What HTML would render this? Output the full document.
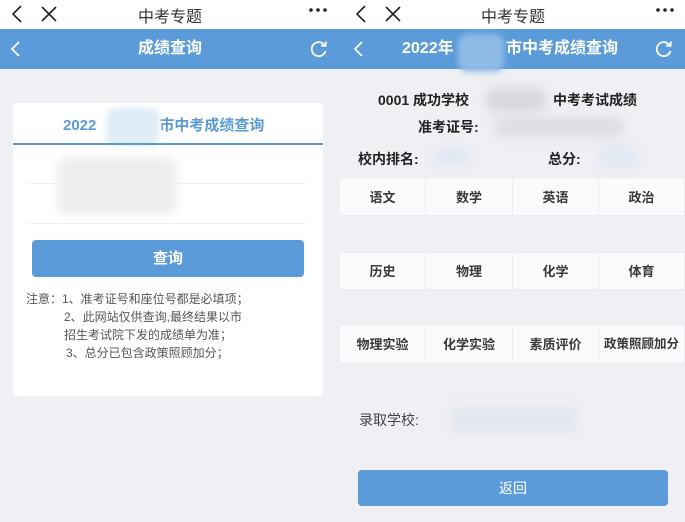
<!DOCTYPE html>
<html><head><meta charset="utf-8"><style>
*{margin:0;padding:0;box-sizing:border-box}
body{width:685px;height:522px;overflow:hidden;background:#efeff4;font-family:"Liberation Sans","Noto Sans CJK SC",sans-serif;position:relative}
.a{position:absolute}
.top{background:#fff;height:29px;top:0}
.hdr{background:#5b9bd9;height:40px;top:29px;color:#fff;font-size:16px;font-weight:bold;line-height:40px;text-align:center}
.blur{position:absolute;filter:blur(5px);border-radius:10px}
.tb{position:absolute;left:340px;width:345px;display:grid;grid-template-columns:86px 87px 86px 86px}
.tb div{height:37px;line-height:37px;text-align:center;font-size:13px;color:#333;border-right:1px solid #ececf0;border-bottom:1px solid #ececf0}
.h div{background:#fbfbfd;font-weight:bold;color:#3a3a3a}
.d div{background:#f0f0f4;border-right-color:#f0f0f4}
</style></head><body>
<div class="a top" style="left:0;width:340px"></div>
<div class="a top" style="left:340px;width:345px"></div>
<svg class="a" style="left:8px;top:4px" width="50" height="20"><path d="M13 2L5 10L13 18" stroke="#222" stroke-width="1.6" fill="none"/><path d="M34 3L48 17M48 3L34 17" stroke="#222" stroke-width="1.6" fill="none"/></svg>
<div class="a" style="left:120px;top:3px;width:100px;text-align:center;font-size:16px;color:#333">中考专题</div>
<svg class="a" style="left:308px;top:7px" width="22" height="6"><circle cx="3" cy="3" r="1.8" fill="#222"/><circle cx="10" cy="3" r="1.8" fill="#222"/><circle cx="17" cy="3" r="1.8" fill="#222"/></svg>
<svg class="a" style="left:352px;top:4px" width="50" height="20"><path d="M13 2L5 10L13 18" stroke="#222" stroke-width="1.6" fill="none"/><path d="M34 3L48 17M48 3L34 17" stroke="#222" stroke-width="1.6" fill="none"/></svg>
<div class="a" style="left:463px;top:3px;width:100px;text-align:center;font-size:16px;color:#333">中考专题</div>
<svg class="a" style="left:655px;top:7px" width="22" height="6"><circle cx="3" cy="3" r="1.8" fill="#222"/><circle cx="10" cy="3" r="1.8" fill="#222"/><circle cx="17" cy="3" r="1.8" fill="#222"/></svg>
<div class="a hdr" style="left:0;width:340px">成绩查询</div>
<div class="a hdr" style="left:340px;width:345px;text-align:left"><span style="position:absolute;left:62px">2022年</span><span style="position:absolute;left:166px">市中考成绩查询</span></div>
<div class="blur" style="left:458px;top:34px;width:46px;height:38px;background:#8fbbe6;filter:blur(3px)"></div>
<svg class="a" style="left:8px;top:40px" width="14" height="18"><path d="M11 2L4 9L11 16" stroke="#fff" stroke-width="1.8" fill="none"/></svg>
<svg class="a" style="left:351px;top:40px" width="14" height="18"><path d="M11 2L4 9L11 16" stroke="#fff" stroke-width="1.8" fill="none"/></svg>
<svg class="a" style="left:310px;top:40px" width="18" height="18"><path d="M15 6A7 7 0 1 0 15.5 11" stroke="#fff" stroke-width="1.8" fill="none"/><path d="M11 5.5L15.5 6L16 1.5" stroke="#fff" stroke-width="1.8" fill="none"/></svg>
<svg class="a" style="left:655px;top:40px" width="18" height="18"><path d="M15 6A7 7 0 1 0 15.5 11" stroke="#fff" stroke-width="1.8" fill="none"/><path d="M11 5.5L15.5 6L16 1.5" stroke="#fff" stroke-width="1.8" fill="none"/></svg>
<div class="a" style="left:13px;top:103px;width:310px;height:293px;background:#fff;border-radius:4px"></div>
<div class="a" style="left:63px;top:114px;height:24px;line-height:24px;font-size:15px;font-weight:bold;color:#5b9bd5;white-space:nowrap">2022<span style="display:inline-block;width:63px"></span>市中考成绩查询</div>
<div class="blur" style="left:106px;top:108px;width:54px;height:38px;background:#e0ecf6;filter:blur(3px)"></div>
<div class="a" style="left:13px;top:143px;width:310px;height:2px;background:#5b9bd5"></div>
<div class="a" style="left:30px;top:183px;width:276px;height:1px;background:#eee"></div>
<div class="a" style="left:30px;top:223px;width:276px;height:1px;background:#eee"></div>
<div class="blur" style="left:57px;top:158px;width:120px;height:56px;background:#ededef"></div>
<div class="a" style="left:32px;top:240px;width:272px;height:37px;background:#5b9bd9;border-radius:4px;color:#fff;text-align:center;line-height:37px;font-size:15px;font-weight:bold">查询</div>
<div class="a" style="left:26px;top:290px;font-size:12px;color:#555;line-height:18px">注意：1、准考证号和座位号都是必填项；<br><span style="padding-left:38px">2、此网站仅供查询,最终结果以市</span><br><span style="padding-left:38px">招生考试院下发的成绩单为准；</span><br><span style="padding-left:40px">3、总分已包含政策照顾加分；</span></div>
<div class="a" style="left:378px;top:90px;font-size:14px;font-weight:bold;color:#222">0001 成功学校</div>
<div class="blur" style="left:486px;top:88px;width:60px;height:24px;background:#d8d8dc"></div>
<div class="a" style="left:553px;top:90px;font-size:14px;font-weight:bold;color:#222">中考考试成绩</div>
<div class="a" style="left:418px;top:117px;font-size:14px;font-weight:bold;color:#222">准考证号:</div>
<div class="blur" style="left:494px;top:117px;width:130px;height:20px;background:#dedee2"></div>
<div class="a" style="left:358px;top:149px;font-size:14px;font-weight:bold;color:#222">校内排名:</div>
<div class="blur" style="left:434px;top:150px;width:36px;height:14px;background:#dfe6f2"></div>
<div class="a" style="left:548px;top:149px;font-size:14px;font-weight:bold;color:#222">总分:</div>
<div class="blur" style="left:598px;top:146px;width:40px;height:22px;background:#e2e8f2"></div>
<div class="tb h" style="top:179px"><div>语文</div><div>数学</div><div>英语</div><div>政治</div></div>
<div class="tb d" style="top:216px"><div></div><div></div><div></div><div></div></div>
<div class="tb h" style="top:253px"><div>历史</div><div>物理</div><div>化学</div><div>体育</div></div>
<div class="tb d" style="top:290px"><div></div><div></div><div></div><div></div></div>
<div class="tb h" style="top:326px"><div>物理实验</div><div>化学实验</div><div>素质评价</div><div style="font-size:12.5px;white-space:nowrap;overflow:hidden">政策照顾加分</div></div>
<div class="tb d" style="top:362px"><div></div><div></div><div></div><div></div></div>
<div class="a" style="left:359px;top:410px;font-size:14px;color:#444">录取学校:</div>
<div class="blur" style="left:452px;top:408px;width:125px;height:24px;background:#e2e6ee"></div>
<div class="a" style="left:358px;top:470px;width:310px;height:36px;background:#5b9bd9;border-radius:4px;color:#fff;text-align:center;line-height:36px;font-size:14px">返回</div>
</body></html>
